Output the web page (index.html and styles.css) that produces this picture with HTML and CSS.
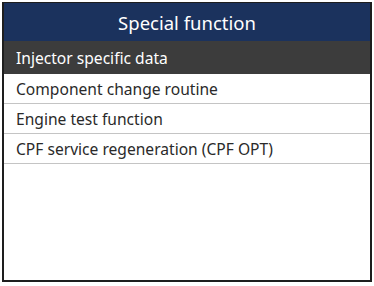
FILE: index.html
```html
<!DOCTYPE html>
<html lang="en">
<head>
    <meta charset="UTF-8">
    <meta name="viewport" content="width=device-width, initial-scale=1.0">
    <title>Special function</title>
    <link rel="stylesheet" href="styles.css">
</head>
<body>
    <div class="screen">
        <div class="header">Special function</div>
        <ul class="menu">
            <li class="item selected">Injector specific data</li>
            <li class="item">Component change routine</li>
            <li class="item">Engine test function</li>
            <li class="item">CPF service regeneration (CPF OPT)</li>
        </ul>
    </div>
</body>
</html>
```

FILE: styles.css
```css
* {
    margin: 0;
    padding: 0;
    box-sizing: border-box;
}

body {
    font-family: 'Noto Sans', sans-serif;
    background: #fff;
    padding: 2px 2px 0 2px;
}

.screen {
    width: 370px;
    height: 280px;
    border: 2px solid #1e1e1e;
    border-top-width: 1px;
    background: #fff;
    display: flex;
    flex-direction: column;
}

.header {
    height: 38px;
    background: #1b325d;
    color: #fff;
    font-size: 18.5px;
    display: flex;
    align-items: center;
    justify-content: center;
}

.menu {
    list-style: none;
}

.item {
    height: 30px;
    padding-left: 12px;
    padding-top: 1px;
    font-size: 15.6px;
    color: #2a2a2a;
    display: flex;
    align-items: center;
    border-bottom: 1px solid #c4c4c4;
}

.item.selected {
    height: 33px;
    background: #3c3c3c;
    color: #fff;
    border-bottom: none;
}
```
